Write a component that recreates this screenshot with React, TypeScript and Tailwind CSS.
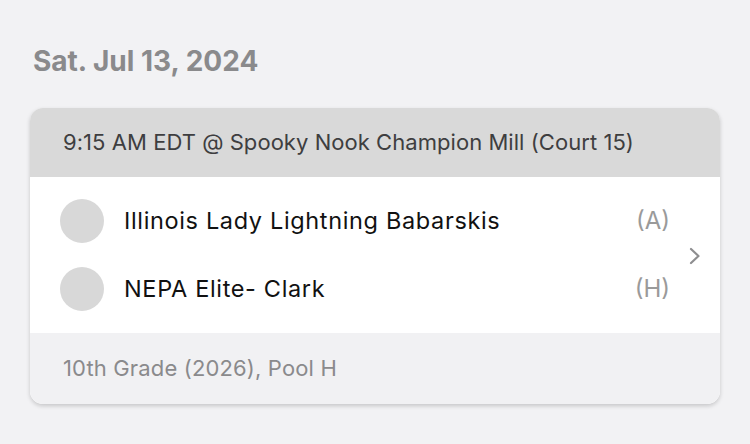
const teams = [
  { name: "Illinois Lady Lightning Babarskis", side: "(A)" },
  { name: "NEPA Elite- Clark", side: "(H)" },
]

export default function App() {
  return (
    <div
      className="w-[750px] h-[444px] bg-[#f2f2f4] overflow-hidden"
      style={{ fontFamily: "Inter, 'Noto Sans', sans-serif" }}
    >
      <div className="pl-[33px] pt-[42px] text-[28px] font-bold text-[#8a8a8c] leading-[38px]">
        Sat. Jul 13, 2024
      </div>

      <div className="relative mt-[28px] ml-[30px] w-[690px] rounded-[13px] overflow-hidden bg-white shadow-[0_2px_4px_rgba(0,0,0,0.18)]">
        <div className="h-[69px] bg-[#d9d9d9] flex items-center pl-[33px] text-[22px] text-[#3e3e40] tracking-[0.05px]">
          9:15 AM EDT @ Spooky Nook Champion Mill (Court 15)
        </div>

        <div className="h-[156px] flex items-center">
          <div className="flex-1 flex flex-col gap-[24px] pl-[30px] pr-[50px]">
            {teams.map((t) => (
              <div key={t.name} className="flex items-center">
                <div className="w-[44px] h-[44px] rounded-full bg-[#d8d8d8]" />
                <div className="ml-[20px] flex-1 text-[23.5px] text-[#111] tracking-[0.65px]">{t.name}</div>
                <div className="text-[24px] text-[#9a9a9a]">{t.side}</div>
              </div>
            ))}
          </div>
          <svg
            className="absolute left-[658px] top-[139px]"
            width="14"
            height="18"
            viewBox="0 0 14 18"
            fill="none"
            stroke="#8e8e90"
            strokeWidth="2.2"
            strokeLinecap="round"
            strokeLinejoin="round"
          >
            <path d="M3 2 L10.5 9 L3 16" />
          </svg>
        </div>

        <div className="h-[71px] bg-[#f1f1f3] flex items-center pl-[33px] text-[22px] text-[#8a8a8c] tracking-[0.15px]">
          10th Grade (2026), Pool H
        </div>
      </div>
    </div>
  )
}
